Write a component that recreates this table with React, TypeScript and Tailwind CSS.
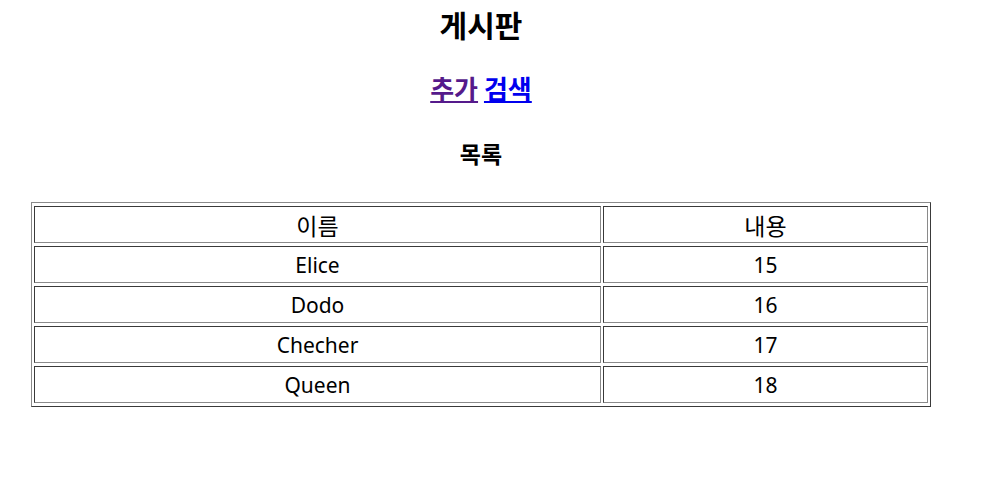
import React from 'react';

const rows = [
  { name: 'Elice', content: '15' },
  { name: 'Dodo', content: '16' },
  { name: 'Checher', content: '17' },
  { name: 'Queen', content: '18' },
];

const cell =
  'border border-t-[#3a3a3a] border-l-[#3a3a3a] border-b-[#8a8a8a] border-r-[#8a8a8a] px-px pt-[2px] pb-0 h-[37px] leading-[33px] text-center font-normal';

const App: React.FC = () => {
  return (
    <div className="min-h-screen bg-white text-black">
      <div className="w-[962px] font-['Noto_Sans','Noto_Sans_CJK_KR',sans-serif]">
        <h1 className="text-center text-[30px] font-bold leading-[48px] font-['Noto_Sans_CJK_KR',sans-serif]">게시판</h1>
        <h2 className="mt-[20px] text-center text-[26px] font-bold leading-[40px] font-['Noto_Sans_CJK_KR',sans-serif]">
          <a href="#add" className="text-[#551a8b] underline">추가</a>{' '}
          <a href="#search" className="text-[#0000ee] underline">검색</a>
        </h2>
        <h3 className="mt-[30px] text-center text-[23px] font-bold leading-[30px] font-['Noto_Sans_CJK_KR',sans-serif]">목록</h3>

        <table className="mx-auto mt-[34px] w-[900px] border-separate border-spacing-x-[2px] border-spacing-y-[3px] border border-t-[#8a8a8a] border-l-[#8a8a8a] border-b-[#3a3a3a] border-r-[#3a3a3a] text-[21px]">
          <thead>
            <tr>
              <th className={`${cell} w-[567px] text-[23px] font-['Noto_Sans_CJK_KR',sans-serif]`}>이름</th>
              <th className={`${cell} text-[23px] font-['Noto_Sans_CJK_KR',sans-serif]`}>내용</th>
            </tr>
          </thead>
          <tbody>
            {rows.map((row) => (
              <tr key={row.name}>
                <td className={cell}>{row.name}</td>
                <td className={cell}>{row.content}</td>
              </tr>
            ))}
          </tbody>
        </table>
      </div>
    </div>
  );
};

export default App;
